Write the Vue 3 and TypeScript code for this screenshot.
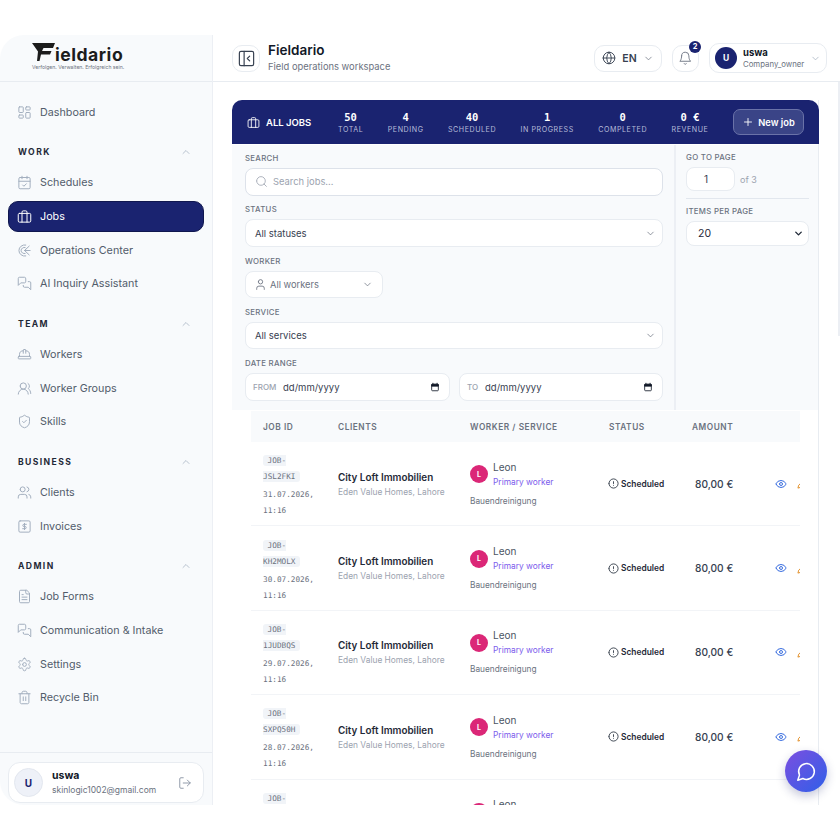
<template>
  <div class="frame">
    <aside class="sidebar">
      <div class="logo">
        <div class="logo-line">
          <svg class="logo-mark" viewBox="0 0 23 18" width="23" height="18">
            <path d="M0 0H23L21 5H11.5L10 8H19.5L18 11.5H9L7.5 18H5L6 8.5Z" fill="#1c1c1c" />
          </svg>
          <span class="logo-word">ieldario</span>
        </div>
        <div class="logo-tag">Verfolgen. Verwalten. Erfolgreich sein.</div>
      </div>

      <nav class="nav">
        <a class="nav-item"><svg class="ic nav-ic" viewBox="0 0 24 24"><path v-for="d in icons.dashboard" :key="d" :d="d" /></svg>Dashboard</a>
        <section v-for="group in groups" :key="group.title" class="nav-group">
          <div class="nav-title">
            <span>{{ group.title }}</span>
            <svg class="ic title-chev" viewBox="0 0 24 24"><path d="m18 15-6-6-6 6" /></svg>
          </div>
          <a v-for="item in group.items" :key="item.label" class="nav-item" :class="{ active: item.active }">
            <svg class="ic nav-ic" viewBox="0 0 24 24"><path v-for="d in icons[item.icon]" :key="d" :d="d" /></svg>
            {{ item.label }}
          </a>
        </section>
      </nav>

      <div class="side-foot">
        <div class="foot-card">
          <span class="foot-avatar">U</span>
          <div class="foot-text">
            <strong>uswa</strong>
            <span>skinlogic1002@gmail.com</span>
          </div>
          <svg class="ic foot-out" viewBox="0 0 24 24"><path v-for="d in icons.logout" :key="d" :d="d" /></svg>
        </div>
      </div>
    </aside>

    <main class="main">
      <header class="topbar">
        <button class="tool-btn toggle">
          <svg class="ic" viewBox="0 0 24 24"><path v-for="d in icons.panel" :key="d" :d="d" /></svg>
        </button>
        <div class="top-title">
          <h1>Fieldario</h1>
          <p>Field operations workspace</p>
        </div>
        <button class="tool-btn lang">
          <svg class="ic" viewBox="0 0 24 24"><path v-for="d in icons.globe" :key="d" :d="d" /></svg>
          <span>EN</span>
          <svg class="ic chev" viewBox="0 0 24 24"><path d="m6 9 6 6 6-6" /></svg>
        </button>
        <button class="tool-btn bell">
          <svg class="ic" viewBox="0 0 24 24"><path v-for="d in icons.bell" :key="d" :d="d" /></svg>
          <span class="bell-count">2</span>
        </button>
        <button class="tool-btn user">
          <span class="user-avatar">U</span>
          <span class="user-text"><strong>uswa</strong><small>Company_owner</small></span>
          <svg class="ic chev" viewBox="0 0 24 24"><path d="m6 9 6 6 6-6" /></svg>
        </button>
      </header>

      <div class="content">
        <div class="jobs-card">
          <div class="banner">
            <div class="banner-title">
              <svg class="ic" viewBox="0 0 24 24"><path v-for="d in icons.jobs" :key="d" :d="d" /></svg>
              ALL JOBS
            </div>
            <div v-for="stat in stats" :key="stat.label" class="stat">
              <b>{{ stat.value }}</b>
              <span>{{ stat.label }}</span>
            </div>
            <button class="new-job">
              <svg class="ic" viewBox="0 0 24 24"><path d="M5 12h14" /><path d="M12 5v14" /></svg>
              New job
            </button>
          </div>

          <div class="filters">
            <div class="filter-left">
              <label>SEARCH</label>
              <div class="field search">
                <svg class="ic" viewBox="0 0 24 24"><path v-for="d in icons.search" :key="d" :d="d" /></svg>
                <span>Search jobs...</span>
              </div>
              <label>STATUS</label>
              <div class="field"><span class="val">All statuses</span><svg class="ic chev" viewBox="0 0 24 24"><path d="m6 9 6 6 6-6" /></svg></div>
              <label>WORKER</label>
              <div class="field worker">
                <svg class="ic" viewBox="0 0 24 24"><path v-for="d in icons.user" :key="d" :d="d" /></svg>
                <span>All workers</span>
                <svg class="ic chev" viewBox="0 0 24 24"><path d="m6 9 6 6 6-6" /></svg>
              </div>
              <label>SERVICE</label>
              <div class="field"><span class="val">All services</span><svg class="ic chev" viewBox="0 0 24 24"><path d="m6 9 6 6 6-6" /></svg></div>
              <label>DATE RANGE</label>
              <div class="dates">
                <div v-for="d in ['FROM', 'TO']" :key="d" class="field date">
                  <em>{{ d }}</em>
                  <span>dd/mm/yyyy</span>
                  <svg class="cal" viewBox="0 0 24 24"><path d="M7 2v3M17 2v3" /><rect x="4" y="5" width="16" height="16" rx="2" /><path class="cal-bar" d="M4 6h16v4H4z" /></svg>
                </div>
              </div>
            </div>
            <div class="filter-right">
              <label>GO TO PAGE</label>
              <div class="page-row">
                <div class="field page-input">1</div>
                <span>of 3</span>
              </div>
              <hr />
              <label>ITEMS PER PAGE</label>
              <div class="field per-page">
                <span>20</span>
                <svg class="ic chev-dark" viewBox="0 0 24 24"><path d="m6 9 6 6 6-6" /></svg>
              </div>
            </div>
          </div>

          <div class="table">
            <div class="row head">
              <span>JOB ID</span>
              <span>CLIENTS</span>
              <span>WORKER / SERVICE</span>
              <span>STATUS</span>
              <span>AMOUNT</span>
            </div>
            <div v-for="job in jobs" :key="job.id" class="row">
              <div class="job-id">
                <code>JOB-<br />{{ job.id }}</code>
                <time>{{ job.date }},<br />11:16</time>
              </div>
              <div class="client">
                <strong>City Loft Immobilien</strong>
                <span>Eden Value Homes, Lahore</span>
              </div>
              <div class="worker-cell">
                <div class="worker-top">
                  <span class="worker-avatar">L</span>
                  <div>
                    <div class="worker-name">Leon</div>
                    <div class="worker-role">Primary worker</div>
                  </div>
                </div>
                <div class="worker-service">Bauendreinigung</div>
              </div>
              <div class="status">
                <svg class="ic" viewBox="0 0 24 24"><path v-for="d in icons.alert" :key="d" :d="d" /></svg>
                Scheduled
              </div>
              <div class="amount">80,00 €</div>
              <div class="actions">
                <svg class="ic eye" viewBox="0 0 24 24"><path v-for="d in icons.eye" :key="d" :d="d" /></svg>
                <svg class="ic pen" viewBox="0 0 24 24"><path v-for="d in icons.pen" :key="d" :d="d" /></svg>
              </div>
            </div>
          </div>
        </div>
      </div>
    </main>

    <div class="scroll-thumb"></div>

    <button class="chat">
      <svg class="ic" viewBox="0 0 24 24"><path d="M7.9 20A9 9 0 1 0 4 16.1L2 22Z" /></svg>
    </button>
  </div>
</template>

<script setup lang="ts">
const circle = (cx: number, cy: number, r: number) =>
  `M${cx - r} ${cy}a${r} ${r} 0 1 0 ${r * 2} 0a${r} ${r} 0 1 0 ${-r * 2} 0`

const box = (x: number, y: number, w: number, h: number, r: number) =>
  `M${x + r} ${y}h${w - 2 * r}a${r} ${r} 0 0 1 ${r} ${r}v${h - 2 * r}a${r} ${r} 0 0 1 ${-r} ${r}h${-(w - 2 * r)}a${r} ${r} 0 0 1 ${-r} ${-r}v${-(h - 2 * r)}a${r} ${r} 0 0 1 ${r} ${-r}z`

const icons: Record<string, string[]> = {
  dashboard: [box(3, 3, 7, 9, 1), box(14, 3, 7, 5, 1), box(14, 12, 7, 9, 1), box(3, 16, 7, 5, 1)],
  calendar: ['M8 2v4', 'M16 2v4', box(3, 4, 18, 18, 2), 'M3 10h18', 'm9 16 2 2 4-4'],
  jobs: [box(2, 7, 20, 14, 2), 'M16 21V5a2 2 0 0 0-2-2h-4a2 2 0 0 0-2 2v16'],
  radar: [
    'M14 3.2A9 9 0 1 0 14 20.8',
    'M13 7.2A5 5 0 1 0 13 16.8',
    'M12 12 19.5 5',
    'M12 12h9',
    'M12 12 19.5 19'
  ],
  messages: [
    'M14 9a2 2 0 0 1-2 2H6l-4 4V4a2 2 0 0 1 2-2h8a2 2 0 0 1 2 2z',
    'M18 9h2a2 2 0 0 1 2 2v11l-4-4h-6a2 2 0 0 1-2-2v-1'
  ],
  hardhat: [
    'M10 10V5a1 1 0 0 1 1-1h2a1 1 0 0 1 1 1v5',
    'M14 6a6 6 0 0 1 6 6v3',
    'M4 15v-3a6 6 0 0 1 6-6',
    box(2, 15, 20, 4, 1)
  ],
  group: ['M18 21a8 8 0 0 0-16 0', circle(10, 8, 5), 'M22 20c0-3.37-2-6.5-4-8a5 5 0 0 0-.45-8.3'],
  shield: [
    'M20 13c0 5-3.5 7.5-7.66 8.95a1 1 0 0 1-.67-.01C7.5 20.5 4 18 4 13V6a1 1 0 0 1 1-1c2 0 4.5-1.2 6.24-2.72a1.17 1.17 0 0 1 1.52 0C14.51 3.81 17 5 19 5a1 1 0 0 1 1 1z',
    'm9 12 2 2 4-4'
  ],
  clients: ['M16 21v-2a4 4 0 0 0-4-4H6a4 4 0 0 0-4 4v2', circle(9, 7, 4), 'M22 21v-2a4 4 0 0 0-3-3.87', 'M16 3.13a4 4 0 0 1 0 7.75'],
  invoice: [box(3, 3, 18, 18, 2), 'M15 8.5h-4a1.6 1.6 0 0 0 0 3.5h2a1.6 1.6 0 0 1 0 3.5H9', 'M12 7v10'],
  file: [
    'M15 2H6a2 2 0 0 0-2 2v16a2 2 0 0 0 2 2h12a2 2 0 0 0 2-2V7Z',
    'M14 2v4a2 2 0 0 0 2 2h4',
    'M10 9H8',
    'M16 13H8',
    'M16 17H8'
  ],
  settings: [
    'M12.22 2h-.44a2 2 0 0 0-2 2v.18a2 2 0 0 1-1 1.73l-.43.25a2 2 0 0 1-2 0l-.15-.08a2 2 0 0 0-2.73.73l-.22.38a2 2 0 0 0 .73 2.73l.15.1a2 2 0 0 1 1 1.72v.51a2 2 0 0 1-1 1.74l-.15.09a2 2 0 0 0-.73 2.73l.22.38a2 2 0 0 0 2.73.73l.15-.08a2 2 0 0 1 2 0l.43.25a2 2 0 0 1 1 1.73V20a2 2 0 0 0 2 2h.44a2 2 0 0 0 2-2v-.18a2 2 0 0 1 1-1.73l.43-.25a2 2 0 0 1 2 0l.15.08a2 2 0 0 0 2.73-.73l.22-.39a2 2 0 0 0-.73-2.73l-.15-.08a2 2 0 0 1-1-1.74v-.5a2 2 0 0 1 1-1.74l.15-.09a2 2 0 0 0 .73-2.73l-.22-.38a2 2 0 0 0-2.73-.73l-.15.08a2 2 0 0 1-2 0l-.43-.25a2 2 0 0 1-1-1.73V4a2 2 0 0 0-2-2z',
    circle(12, 12, 3)
  ],
  trash: [
    'M3 6h18',
    'M19 6v14c0 1-1 2-2 2H7c-1 0-2-1-2-2V6',
    'M8 6V4c0-1 1-2 2-2h4c1 0 2 1 2 2v2',
    'M10 11v6',
    'M14 11v6'
  ],
  logout: ['M9 21H5a2 2 0 0 1-2-2V5a2 2 0 0 1 2-2h4', 'm16 17 5-5-5-5', 'M21 12H9'],
  panel: [box(3, 3, 18, 18, 2), 'M9 3v18', 'm16 15-3-3 3-3'],
  globe: [circle(12, 12, 10), 'M12 2a14.5 14.5 0 0 0 0 20 14.5 14.5 0 0 0 0-20', 'M2 12h20'],
  bell: ['M6 8a6 6 0 0 1 12 0c0 7 3 9 3 9H3s3-2 3-9', 'M10.3 21a1.94 1.94 0 0 0 3.4 0'],
  search: [circle(11, 11, 8), 'm21 21-4.3-4.3'],
  user: ['M19 21v-2a4 4 0 0 0-4-4H9a4 4 0 0 0-4 4v2', circle(12, 7, 4)],
  alert: [circle(12, 12, 10), 'M12 8v4', 'M12 16h.01'],
  eye: ['M2.06 12.35a1 1 0 0 1 0-.7 10.75 10.75 0 0 1 19.88 0 1 1 0 0 1 0 .7 10.75 10.75 0 0 1-19.88 0', circle(12, 12, 3)],
  pen: ['M17 3a2.85 2.83 0 1 1 4 4L7.5 20.5 2 22l1.5-5.5Z', 'm15 5 4 4']
}

const groups = [
  {
    title: 'WORK',
    items: [
      { label: 'Schedules', icon: 'calendar' },
      { label: 'Jobs', icon: 'jobs', active: true },
      { label: 'Operations Center', icon: 'radar' },
      { label: 'AI Inquiry Assistant', icon: 'messages' }
    ]
  },
  {
    title: 'TEAM',
    items: [
      { label: 'Workers', icon: 'hardhat' },
      { label: 'Worker Groups', icon: 'group' },
      { label: 'Skills', icon: 'shield' }
    ]
  },
  {
    title: 'BUSINESS',
    items: [
      { label: 'Clients', icon: 'clients' },
      { label: 'Invoices', icon: 'invoice' }
    ]
  },
  {
    title: 'ADMIN',
    items: [
      { label: 'Job Forms', icon: 'file' },
      { label: 'Communication & Intake', icon: 'messages' },
      { label: 'Settings', icon: 'settings' },
      { label: 'Recycle Bin', icon: 'trash' }
    ]
  }
]

const stats = [
  { value: '50', label: 'TOTAL' },
  { value: '4', label: 'PENDING' },
  { value: '40', label: 'SCHEDULED' },
  { value: '1', label: 'IN PROGRESS' },
  { value: '0', label: 'COMPLETED' },
  { value: '0 €', label: 'REVENUE' }
]

const jobs = [
  { id: 'JSL2FKI', date: '31.07.2026' },
  { id: 'KH2MOLX', date: '30.07.2026' },
  { id: '1JUDBQS', date: '29.07.2026' },
  { id: 'SXPQ50H', date: '28.07.2026' },
  { id: 'TR4NW8E', date: '27.07.2026' }
]
</script>

<style>
html,
body {
  margin: 0;
  background: #fff;
}
</style>

<style scoped>
.frame {
  position: relative;
  display: flex;
  height: 770px;
  margin: 35px 0;
  overflow: hidden;
  font-family: Inter, 'Liberation Sans', sans-serif;
  color: #111827;
}

.ic {
  width: 16px;
  height: 16px;
  flex: none;
  fill: none;
  stroke: currentColor;
  stroke-width: 2;
  stroke-linecap: round;
  stroke-linejoin: round;
}

/* Sidebar */
.sidebar {
  display: flex;
  flex-direction: column;
  flex: none;
  width: 213px;
  box-sizing: border-box;
  background: #f8fafc;
  border-right: 1px solid #eceff4;
  border-radius: 24px 0 0 24px;
}

.logo {
  height: 47px;
  box-sizing: border-box;
  padding: 8px 0 0 32px;
  border-bottom: 1px solid #e8ecf1;
}

.logo-line {
  display: flex;
  align-items: flex-start;
  height: 21px;
}

.logo-mark {
  flex: none;
}

.logo-word {
  margin-top: 1px;
  font-size: 17.6px;
  line-height: 21px;
  font-weight: 700;
  color: #1c1c1c;
  letter-spacing: 0.5px;
}

.logo-tag {
  margin-top: 0;
  font-size: 5.1px;
  line-height: 6px;
  color: #6b7280;
}

.nav {
  flex: 1;
  padding: 14.5px 8px 0;
}

.nav-item {
  display: flex;
  align-items: center;
  gap: 8px;
  height: 31px;
  margin-bottom: 2.7px;
  padding: 0 8px;
  border: 1px solid transparent;
  border-radius: 10px;
  box-sizing: border-box;
  font-size: 10.75px;
  color: #525c6b;
}

.nav-ic {
  width: 15px;
  height: 15px;
  color: #a3afbf;
  stroke-width: 1.6;
}

.nav-item.active {
  background: #1a2370;
  border-color: #10174f;
  color: #fff;
}

.active .nav-ic {
  color: #fff;
}

.nav-group {
  margin-top: 17.2px;
}

.nav-title {
  display: flex;
  align-items: center;
  justify-content: space-between;
  height: 15px;
  margin-bottom: 7.5px;
  padding: 0 10px;
  font-size: 8.6px;
  font-weight: 700;
  letter-spacing: 1.4px;
  color: #1f2937;
}

.title-chev {
  width: 12px;
  height: 12px;
  margin-right: 2px;
  color: #a3afbf;
  stroke-width: 1.5;
}

.side-foot {
  height: 53px;
  box-sizing: border-box;
  padding: 9px 8px 0;
  border-top: 1px solid #e8ecf1;
}

.foot-card {
  display: flex;
  align-items: center;
  height: 41px;
  box-sizing: border-box;
  padding: 0 11px 0 5px;
  background: #fff;
  border: 1px solid #e8ecf1;
  border-radius: 12px;
}

.foot-avatar {
  display: grid;
  place-items: center;
  flex: none;
  width: 29px;
  height: 29px;
  background: #eef1f8;
  border: 1px solid #e3e7ef;
  border-radius: 50%;
  box-sizing: border-box;
  font-size: 10px;
  font-weight: 700;
  color: #1a2370;
}

.foot-text {
  display: flex;
  flex: 1;
  flex-direction: column;
  gap: 2px;
  margin-left: 9px;
}

.foot-text strong {
  font-size: 10.5px;
  line-height: 12px;
  color: #111827;
}

.foot-text span {
  font-size: 8.5px;
  line-height: 12px;
  color: #6b7280;
}

.foot-out {
  width: 14px;
  height: 14px;
  color: #8b95a5;
  stroke-width: 1.6;
}

/* Main */
.main {
  flex: 1;
  min-width: 0;
  display: flex;
  flex-direction: column;
}

.topbar {
  display: flex;
  align-items: center;
  flex: none;
  height: 47px;
  box-sizing: border-box;
  padding: 0 13px 0 19px;
  background: #fff;
  border-bottom: 1px solid #e8ecf1;
}

.tool-btn {
  position: relative;
  display: flex;
  align-items: center;
  justify-content: center;
  height: 27px;
  padding: 0;
  background: #fff;
  border: 1px solid #e8ecf1;
  border-radius: 10px;
  font-family: inherit;
  color: #374151;
}

.toggle {
  width: 28px;
  color: #374151;
}

.toggle .ic {
  width: 19px;
  height: 19px;
  stroke-width: 1.5;
}

.top-title {
  flex: 1;
  margin-left: 8px;
}

.top-title h1 {
  margin: 0;
  font-size: 13.5px;
  line-height: 15px;
  font-weight: 600;
  color: #111827;
}

.top-title p {
  margin: 2px 0 0;
  font-size: 9.4px;
  line-height: 13px;
  color: #6b7280;
}

.lang {
  width: 68px;
  gap: 6px;
  font-size: 10.5px;
  font-weight: 600;
}

.lang .ic:first-child {
  width: 14px;
  height: 14px;
  stroke-width: 1.6;
}

.chev {
  width: 11px;
  height: 11px;
  color: #6b7280;
  stroke-width: 1.6;
}

.bell {
  width: 27px;
  margin-left: 10px;
}

.bell .ic {
  width: 14.5px;
  height: 14.5px;
  stroke-width: 1.5;
  color: #6b7280;
}

.bell-count {
  position: absolute;
  top: -5px;
  right: -3px;
  display: grid;
  place-items: center;
  width: 12px;
  height: 12px;
  background: #1a2370;
  border-radius: 50%;
  font-size: 7.5px;
  font-weight: 700;
  color: #fff;
}

.user {
  justify-content: flex-start;
  width: 118px;
  height: 30px;
  margin-left: 10px;
  padding-left: 5px;
}

.user-avatar {
  display: grid;
  place-items: center;
  flex: none;
  width: 22px;
  height: 22px;
  background: #1a2370;
  border-radius: 50%;
  font-size: 8.5px;
  font-weight: 700;
  color: #fff;
}

.user-text {
  display: flex;
  flex: 1;
  flex-direction: column;
  margin-left: 6px;
  text-align: left;
}

.user-text strong {
  font-size: 9.5px;
  line-height: 12px;
  color: #111827;
}

.user-text small {
  font-size: 7.8px;
  line-height: 11px;
  color: #6b7280;
}

.user .chev {
  margin-right: 5px;
  color: #a3afbf;
}

.content {
  flex: 1;
  min-height: 0;
  padding: 18px 21px 0 19px;
  background: #fff;
}

.jobs-card {
  border-right: 1px solid #e8ecf1;
}

.banner {
  display: flex;
  align-items: center;
  height: 44px;
  box-sizing: border-box;
  padding: 0 15px;
  margin-right: -1px;
  background: #1a2370;
  border-radius: 10px 10px 0 0;
  color: #fff;
}

.banner-title {
  display: flex;
  align-items: center;
  gap: 6px;
  width: 91px;
  flex: none;
  font-size: 9.5px;
  font-weight: 600;
  white-space: nowrap;
}

.banner-title .ic {
  width: 13px;
  height: 13px;
  stroke-width: 1.6;
}

.stat {
  display: flex;
  flex-direction: column;
  align-items: center;
  flex: none;
  margin-right: 24.5px;
  white-space: nowrap;
}

.stat b {
  padding-top: 1px;
  font-family: 'DejaVu Sans Mono', 'Liberation Mono', monospace;
  font-size: 10.5px;
  line-height: 13px;
  font-weight: 700;
}

.stat span {
  margin-top: 1px;
  font-size: 7.1px;
  line-height: 9px;
  letter-spacing: 0.56px;
  color: #b5bbd8;
}

.new-job {
  display: flex;
  align-items: center;
  justify-content: center;
  gap: 4px;
  flex: none;
  width: 71px;
  height: 26px;
  margin-left: auto;
  padding: 0;
  background: #3a4487;
  border: 1px solid #6a72a8;
  border-radius: 7px;
  font-family: inherit;
  font-size: 9.3px;
  font-weight: 600;
  color: #fff;
  white-space: nowrap;
}

.new-job .ic {
  width: 12px;
  height: 12px;
  stroke-width: 1.8;
}

.filters {
  display: flex;
  height: 265px;
  margin-top: 1px;
  background: #f8fafc;
}

.filter-left {
  width: 444px;
  flex: none;
  box-sizing: border-box;
  padding: 8px 11px 0 13px;
  border-right: 2px solid #eceff4;
}

.filter-right {
  flex: 1;
  padding: 7px 9px 0 10px;
}

label {
  display: block;
  height: 11px;
  margin-bottom: 4px;
  font-size: 7.8px;
  line-height: 11px;
  font-weight: 500;
  letter-spacing: 0.3px;
  color: #6b7280;
}

.field {
  display: flex;
  align-items: center;
  justify-content: space-between;
  height: 27.5px;
  margin-bottom: 8.8px;
  padding: 0 6px 0 9px;
  box-sizing: border-box;
  background: #fff;
  border: 1px solid #e8ecf1;
  border-radius: 8px;
  font-size: 9.5px;
  color: #374151;
}

.search {
  justify-content: flex-start;
  gap: 5px;
  border-color: #dde2ea;
  color: #9ca3af;
  font-size: 9.4px;
}

.search .ic {
  width: 13px;
  height: 13px;
  color: #9ca3af;
  stroke-width: 1.5;
}

.worker {
  justify-content: flex-start;
  gap: 3.5px;
  width: 138px;
  color: #6b7280;
  font-size: 9.3px;
}

.worker .ic:first-child {
  width: 13px;
  height: 13px;
  margin-left: -1.5px;
  stroke-width: 1.6;
}

.worker .chev {
  margin-left: auto;
  margin-right: 3px;
}

.dates {
  display: grid;
  grid-template-columns: 205px 204px;
  gap: 9px;
}

.date {
  justify-content: flex-start;
  height: 28px;
  padding: 0 8px 0 7px;
}

.date em {
  width: 30px;
  font-style: normal;
  font-size: 8px;
  font-weight: 500;
  color: #9ca3af;
}

.date:last-child em {
  width: 18px;
}

.date .cal {
  width: 10px;
  height: 10px;
  margin-left: auto;
  margin-right: 1px;
  fill: none;
  stroke: #111827;
  stroke-width: 2;
}

.cal-bar {
  fill: #111827;
}

.page-row {
  display: flex;
  align-items: center;
  gap: 5px;
}

.page-row span {
  font-size: 9px;
  color: #9ca3af;
}

.page-input {
  width: 49px;
  height: 24px;
  margin-bottom: 0;
  padding: 0 0 0 17px;
  font-size: 10px;
}

hr {
  height: 1px;
  margin: 7px 0;
  background: #e2e7ee;
  border: 0;
}

.per-page {
  height: 25px;
  padding: 0 4px 0 11px;
  font-size: 10.5px;
  color: #1f2937;
}

.chev-dark {
  width: 11px;
  height: 11px;
  stroke-width: 3;
  color: #1f2937;
}

/* Table */
.table {
  margin: 1px 18px 0 19px;
  overflow: hidden;
}

.row {
  display: grid;
  grid-template-columns: 75px 132px 139px 83px 83px 60px;
  align-items: center;
  height: 84.4px;
  box-sizing: border-box;
  padding-left: 12px;
  border-bottom: 1px solid #f2f4f7;
  width: 584px;
}

.row.head {
  height: 31px;
  background: #f8fafc;
  border-bottom: 0;
  width: 100%;
  font-size: 8.3px;
  font-weight: 600;
  letter-spacing: 0.55px;
  color: #6b7280;
}

.job-id {
  margin-top: 5px;
  font-family: 'DejaVu Sans Mono', 'Liberation Mono', monospace;
  font-size: 7.7px;
  line-height: 16px;
  color: #6b7280;
}

.job-id code {
  padding: 1px 4.5px;
  font-family: inherit;
  background: #f1f4f8;
  border-radius: 3px;
  white-space: nowrap;
}

.job-id time {
  display: block;
  margin-top: 2px;
  white-space: nowrap;
}

.client strong {
  display: block;
  font-size: 9.9px;
  line-height: 14px;
  font-weight: 600;
  color: #1f2937;
}

.client span {
  display: block;
  margin-top: 2px;
  font-size: 8.4px;
  line-height: 12px;
  color: #9ca3af;
}

.worker-top {
  display: flex;
  align-items: center;
  gap: 5px;
}

.worker-avatar {
  display: grid;
  place-items: center;
  flex: none;
  width: 18px;
  height: 18px;
  background: #db2777;
  border-radius: 50%;
  font-size: 7px;
  font-weight: 700;
  color: #fff;
}

.worker-name {
  font-size: 10px;
  line-height: 15px;
  color: #4b5563;
}

.worker-role {
  margin-top: 1px;
  font-size: 8.4px;
  line-height: 13px;
  color: #7c5cec;
}

.worker-service {
  margin-top: 6px;
  font-size: 8.3px;
  line-height: 13px;
  color: #6b7280;
}

.status {
  display: flex;
  align-items: center;
  gap: 2px;
  margin-left: -1px;
  font-size: 8.4px;
  font-weight: 600;
  color: #1f2937;
}

.status .ic {
  width: 11px;
  height: 11px;
  stroke-width: 1.8;
}

.amount {
  padding-left: 3px;
  font-size: 10.2px;
  font-weight: 500;
  color: #374151;
}

.actions {
  display: flex;
  align-items: center;
  gap: 10px;
}

.eye {
  width: 12px;
  height: 12px;
  color: #3b6fe0;
}

.pen {
  width: 11px;
  height: 11px;
  color: #e08a1e;
}

.scroll-thumb {
  position: absolute;
  top: 47px;
  right: 0;
  width: 2px;
  height: 254px;
  background: #eceff4;
}

.chat {
  position: absolute;
  left: 785px;
  top: 715px;
  display: grid;
  place-items: center;
  width: 42px;
  height: 42px;
  padding: 0;
  background: linear-gradient(135deg, #7c4fe0, #2f5fe8);
  border: 0;
  border-radius: 50%;
  box-shadow: 0 4px 10px rgba(30, 40, 110, 0.25);
  color: #fff;
}

.chat .ic {
  width: 21px;
  height: 21px;
  stroke-width: 1.7;
}
</style>
